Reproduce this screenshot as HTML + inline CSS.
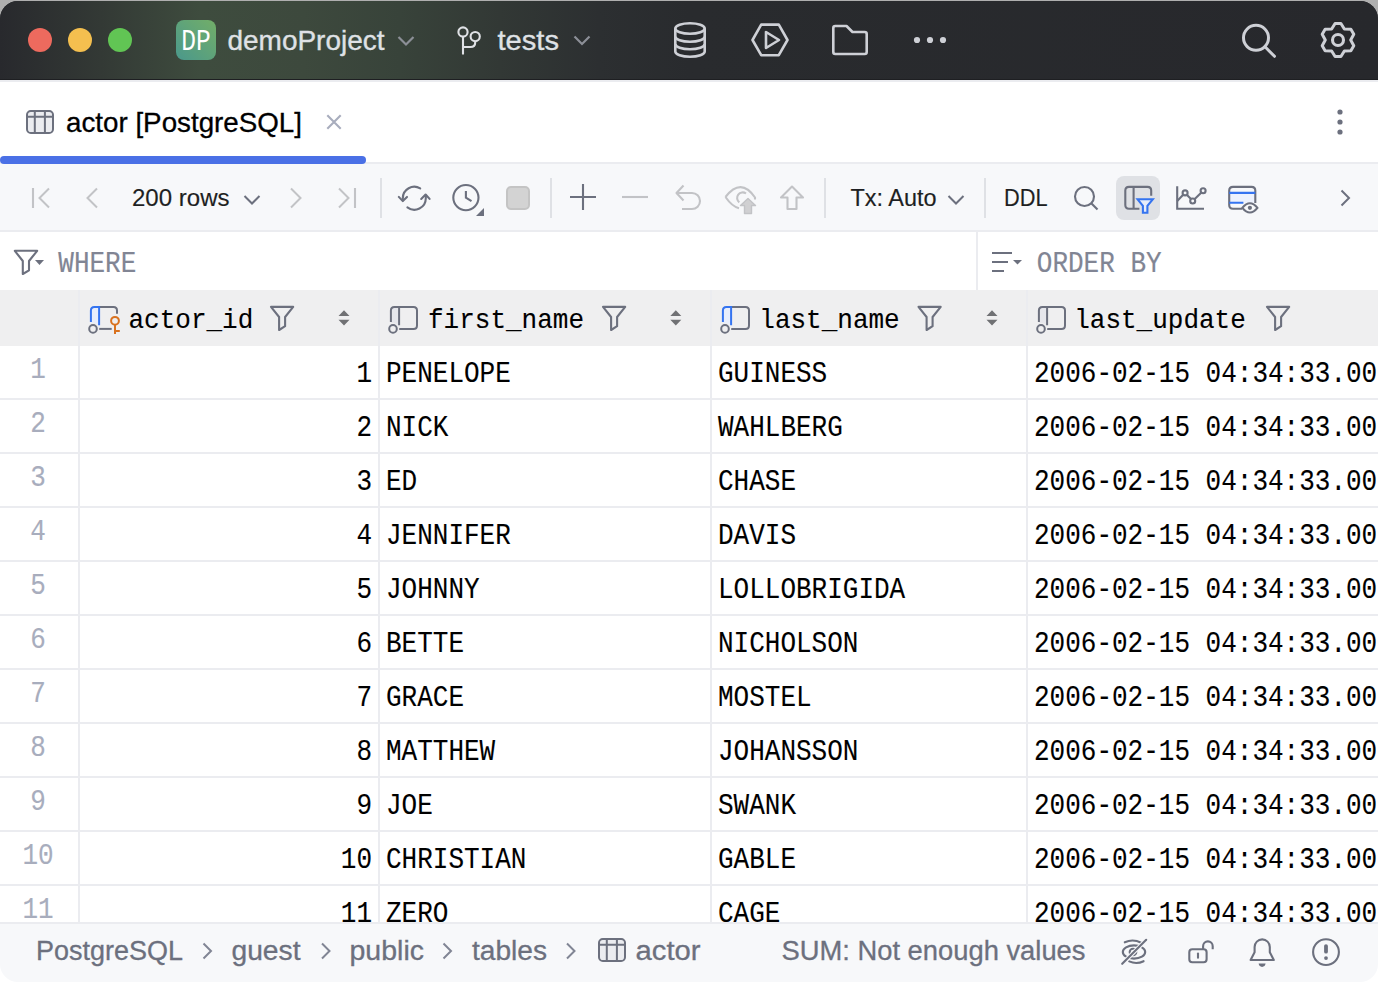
<!DOCTYPE html>
<html><head><meta charset="utf-8"><title>actor [PostgreSQL]</title>
<style>html,body{margin:0;padding:0;width:1378px;height:982px;overflow:hidden;background:#fff;} svg{display:block;} text{white-space:pre;}</style>
</head><body>
<svg width="1378" height="982" viewBox="0 0 1378 982"><defs><linearGradient id="tg" gradientUnits="userSpaceOnUse" x1="0" y1="0" x2="1378" y2="0"><stop offset="0" stop-color="#28292D"/><stop offset="0.073" stop-color="#333935"/><stop offset="0.145" stop-color="#3E4C3E"/><stop offset="0.22" stop-color="#3D493D"/><stop offset="0.29" stop-color="#38433A"/><stop offset="0.363" stop-color="#323835"/><stop offset="0.435" stop-color="#2C2F31"/><stop offset="0.5" stop-color="#292B2E"/><stop offset="1" stop-color="#27282C"/></linearGradient><linearGradient id="dp" x1="0" y1="1" x2="1" y2="0"><stop offset="0" stop-color="#4A988C"/><stop offset="1" stop-color="#72AE68"/></linearGradient></defs>
<rect x="0" y="0" width="1378" height="982" fill="#FFFFFF"/>
<rect x="0" y="0" width="1378" height="40" fill="#AFAFAF"/>
<clipPath id="win"><rect x="0" y="1" width="1378" height="981" rx="18" ry="18"/></clipPath>
<g clip-path="url(#win)">
<rect x="0" y="0" width="1378" height="80" fill="#27282C"/>
<rect x="0" y="0" width="1378" height="80" fill="url(#tg)"/>
<rect x="0" y="79" width="1378" height="1" fill="#1E1F22"/>
<rect x="0" y="80" width="1378" height="84" fill="#FFFFFF"/>
<rect x="0" y="80" width="1378" height="2" fill="#EBECF0"/>
<rect x="0" y="162" width="1378" height="2" fill="#EBECF0"/>
<rect x="0" y="164" width="1378" height="68" fill="#F7F8FA"/>
<rect x="0" y="230" width="1378" height="2" fill="#EBECF0"/>
<rect x="0" y="232" width="1378" height="58" fill="#FFFFFF"/>
<rect x="976" y="232" width="2" height="58" fill="#EBECF0"/>
<rect x="0" y="290" width="1378" height="56" fill="#EFEFF0"/>
<rect x="0" y="346" width="1378" height="576" fill="#FFFFFF"/>
<rect x="0" y="398" width="1378" height="2" fill="#EBECF0"/>
<rect x="0" y="452" width="1378" height="2" fill="#EBECF0"/>
<rect x="0" y="506" width="1378" height="2" fill="#EBECF0"/>
<rect x="0" y="560" width="1378" height="2" fill="#EBECF0"/>
<rect x="0" y="614" width="1378" height="2" fill="#EBECF0"/>
<rect x="0" y="668" width="1378" height="2" fill="#EBECF0"/>
<rect x="0" y="722" width="1378" height="2" fill="#EBECF0"/>
<rect x="0" y="776" width="1378" height="2" fill="#EBECF0"/>
<rect x="0" y="830" width="1378" height="2" fill="#EBECF0"/>
<rect x="0" y="884" width="1378" height="2" fill="#EBECF0"/>
<rect x="78" y="290" width="2" height="632" fill="#EBECF0"/>
<rect x="378" y="290" width="2" height="632" fill="#EBECF0"/>
<rect x="710" y="290" width="2" height="632" fill="#EBECF0"/>
<rect x="1026" y="290" width="2" height="632" fill="#EBECF0"/>
<rect x="0" y="922" width="1378" height="60" fill="#F7F8FA"/>
<rect x="0" y="922" width="1378" height="2" fill="#EBECF0"/>
</g>
<circle cx="40" cy="40" r="12" fill="#ED6A5E"/>
<circle cx="80" cy="40" r="12" fill="#F4BF4F"/>
<circle cx="120" cy="40" r="12" fill="#61C554"/>
<rect x="176" y="20" width="40" height="40" rx="8" fill="url(#dp)"/>
<text x="196" y="50" font-family='"Liberation Mono", monospace' font-size="28.8" fill="#FFFFFF" stroke="#FFFFFF" stroke-width="0" text-anchor="middle" font-weight="normal" textLength="29.5" lengthAdjust="spacingAndGlyphs" >DP</text>
<text x="227.5" y="50" font-family='"Liberation Sans", sans-serif' font-size="27.6" fill="#DFE1E5" stroke="#DFE1E5" stroke-width="0.35" text-anchor="start" font-weight="normal" textLength="157" lengthAdjust="spacingAndGlyphs" >demoProject</text>
<path d="M398.5 37 L406 44.5 L413.5 37" fill="none" stroke="#8C8F97" stroke-width="2.2"/>
<g fill="none" stroke="#DFE1E5" stroke-width="2.1"><circle cx="463" cy="32" r="4.6"/><circle cx="475.2" cy="36.6" r="4.6"/><path d="M463 36.6 V54.5"/><path d="M475.2 41.2 V42.5 Q475.2 47 470.5 47 H463"/></g>
<text x="497.5" y="50" font-family='"Liberation Sans", sans-serif' font-size="28" fill="#DFE1E5" stroke="#DFE1E5" stroke-width="0.35" text-anchor="start" font-weight="normal" textLength="61.5" lengthAdjust="spacingAndGlyphs" >tests</text>
<path d="M574.5 36.5 L582 44 L589.5 36.5" fill="none" stroke="#8C8F97" stroke-width="2.2"/>
<g fill="none" stroke="#CED0D6" stroke-width="2.6"><ellipse cx="690" cy="28.5" rx="14.7" ry="5.3"/><path d="M675.3 28.5 V51.5 A14.7 5.3 0 0 0 704.7 51.5 V28.5"/><path d="M675.3 36.5 A14.7 5.3 0 0 0 704.7 36.5"/><path d="M675.3 44 A14.7 5.3 0 0 0 704.7 44"/></g>
<g fill="none" stroke="#CED0D6" stroke-width="2.6" stroke-linejoin="round"><path d="M752.5 40 L761.2 24.6 H778.8 L787.5 40 L778.8 55.2 H761.2 Z"/><path d="M766 32 V48 L779 40 Z"/></g>
<path d="M833.3 28 Q833.3 26 835.3 26 H846.5 L852.5 32 H864.7 Q866.7 32 866.7 34 V52 Q866.7 54 864.7 54 H835.3 Q833.3 54 833.3 52 Z" fill="none" stroke="#CED0D6" stroke-width="2.6" stroke-linejoin="round"/>
<circle cx="917" cy="40" r="3.1" fill="#CED0D6"/>
<circle cx="930" cy="40" r="3.1" fill="#CED0D6"/>
<circle cx="943" cy="40" r="3.1" fill="#CED0D6"/>
<g fill="none" stroke="#CED0D6" stroke-width="3"><circle cx="1256" cy="37.8" r="12.5"/><path d="M1265 46.8 L1274.5 56.3" stroke-linecap="round"/></g>
<path d="M1331.65 29.00 L1335.08 23.46 L1340.92 23.46 L1344.35 29.00 L1350.87 29.20 L1353.79 34.25 L1350.70 40.00 L1353.79 45.75 L1350.87 50.80 L1344.35 51.00 L1340.92 56.54 L1335.08 56.54 L1331.65 51.00 L1325.13 50.80 L1322.21 45.75 L1325.30 40.00 L1322.21 34.25 L1325.13 29.20 Z" fill="none" stroke="#CED0D6" stroke-width="3" stroke-linejoin="round"/>
<circle cx="1338" cy="40" r="5.5" fill="none" stroke="#CED0D6" stroke-width="3.1"/>
<g stroke="#6C707E" stroke-width="2" fill="none"><rect x="27" y="111" width="26" height="22" rx="3.8" fill="#EBECF0"/><path d="M27 116.8 H53 M34.8 111 V133 M44.9 111 V133"/></g>
<text x="66" y="132.2" font-family='"Liberation Sans", sans-serif' font-size="27.6" fill="#000000" stroke="#000000" stroke-width="0.3" text-anchor="start" font-weight="normal" textLength="236" lengthAdjust="spacingAndGlyphs" >actor [PostgreSQL]</text>
<path d="M327.3 115.3 L340.7 128.7 M340.7 115.3 L327.3 128.7" stroke="#A8ADBD" stroke-width="2.1"/>
<rect x="0" y="156" width="366" height="8" rx="4" fill="#4A70E6"/>
<circle cx="1340" cy="112" r="2.6" fill="#6C707E"/>
<circle cx="1340" cy="122" r="2.6" fill="#6C707E"/>
<circle cx="1340" cy="132" r="2.6" fill="#6C707E"/>
<path d="M33 188 V208" stroke="#C2C3C6" stroke-width="2.1"/>
<path d="M49 188.5 L39.5 198 L49 207.5" fill="none" stroke="#C2C3C6" stroke-width="2.0"/>
<path d="M97 188.5 L87.5 198 L97 207.5" fill="none" stroke="#C2C3C6" stroke-width="2.0"/>
<text x="132" y="206.2" font-family='"Liberation Sans", sans-serif' font-size="23.2" fill="#1E1F22" stroke="#1E1F22" stroke-width="0.15" text-anchor="start" font-weight="normal" textLength="97.5" lengthAdjust="spacingAndGlyphs" >200 rows</text>
<path d="M244.5 196 L252 203.5 L259.5 196" fill="none" stroke="#6C707E" stroke-width="2.0"/>
<path d="M291 188.5 L300.5 198 L291 207.5" fill="none" stroke="#C2C3C6" stroke-width="2.0"/>
<path d="M339 188.5 L348.5 198 L339 207.5" fill="none" stroke="#C2C3C6" stroke-width="2.0"/>
<path d="M355 188 V208" stroke="#C2C3C6" stroke-width="2.1"/>
<rect x="380" y="178" width="2" height="40" fill="#DFE1E5"/>
<rect x="550" y="178" width="2" height="40" fill="#DFE1E5"/>
<rect x="824" y="178" width="2" height="40" fill="#DFE1E5"/>
<rect x="984" y="178" width="2" height="40" fill="#DFE1E5"/>
<g fill="none" stroke="#6C707E" stroke-width="2.1" stroke-linecap="round" stroke-linejoin="round"><path d="M420.2 188.4 A11.5 11.5 0 0 0 402.8 198.2 V200.5"/><path d="M407.4 207.4 A11.5 11.5 0 0 0 425.8 198.2 V195.5"/><path d="M398.8 196.9 L402.8 201.1 L407 196.9"/><path d="M421.2 198.9 L425.6 194.5 L429.6 198.9"/></g>
<g fill="none" stroke="#6C707E" stroke-width="2.1"><circle cx="465.9" cy="197.6" r="12.6"/><path d="M465.9 191 V197.6 L471.5 201.2"/></g>
<path d="M484 208 V216 H476 Z" fill="#6C707E"/>
<rect x="507" y="187" width="22" height="22" rx="4" fill="#D3D3D3" stroke="#C4C4C4" stroke-width="2"/>
<path d="M570 197 H596 M583 184 V210" stroke="#6C707E" stroke-width="2.1"/>
<path d="M622 197 H648" stroke="#C2C3C6" stroke-width="2.1"/>
<g fill="none" stroke="#C2C3C6" stroke-width="2.1" stroke-linejoin="round"><path d="M683.5 185.5 L676.5 193 L683.5 200.5"/><path d="M676.5 193 H692 A8 8 0 0 1 692 209 H682"/></g>
<g fill="none" stroke="#C2C3C6" stroke-width="2.1"><path d="M725.5 197 Q741 177 755 197.5 V199.5"/><path d="M725.5 197 Q732 206.5 739 208.2"/><path d="M746 193.5 A5.3 5.3 0 1 0 739.3 202.3"/></g>
<path d="M748 198.5 L755.5 205.5 H751.5 V213.5 H744.5 V205.5 H740.5 Z" fill="#D0D0D2" stroke="#C2C3C6" stroke-width="1.4" stroke-linejoin="round"/>
<path d="M792 186.5 L803 197.5 H796.5 V209 H787.5 V197.5 H781 Z" fill="none" stroke="#C2C3C6" stroke-width="2.1" stroke-linejoin="round"/>
<text x="850.5" y="206.2" font-family='"Liberation Sans", sans-serif' font-size="23.2" fill="#1E1F22" stroke="#1E1F22" stroke-width="0.15" text-anchor="start" font-weight="normal" textLength="86" lengthAdjust="spacingAndGlyphs" >Tx: Auto</text>
<path d="M948.5 196 L956 203.5 L963.5 196" fill="none" stroke="#6C707E" stroke-width="2.0"/>
<text x="1004" y="206.2" font-family='"Liberation Sans", sans-serif' font-size="23.2" fill="#1E1F22" stroke="#1E1F22" stroke-width="0.15" text-anchor="start" font-weight="normal" textLength="43.5" lengthAdjust="spacingAndGlyphs" >DDL</text>
<g fill="none" stroke="#6C707E" stroke-width="2.1"><circle cx="1084.5" cy="196.5" r="9.5"/><path d="M1091.5 203.5 L1097.5 209.5"/></g>
<rect x="1116" y="176" width="44" height="44" rx="8" fill="#DFE1E5"/>
<g fill="none" stroke="#6C707E" stroke-width="2.1"><path d="M1139.4 208.7 H1129 Q1125.3 208.7 1125.3 205 V190.6 Q1125.3 186.9 1129 186.9 H1147.5 Q1151.2 186.9 1151.2 190.6 V195.8"/><path d="M1133.6 186.9 V208.7"/></g>
<path d="M1137.6 199.3 H1152.8 L1147.4 205.8 V212.8 H1142.9 V205.8 Z" fill="#E6ECFA" stroke="#3574F0" stroke-width="2.1" stroke-linejoin="miter"/>
<g fill="none" stroke="#6C707E" stroke-width="2.1"><path d="M1177.2 186.3 V208.7 H1204"/><path d="M1177.2 201 L1183.4 194.6"/><path d="M1186.8 194.8 L1191 199.1"/><path d="M1194.5 199.2 L1201.4 192.4"/><circle cx="1185.1" cy="192.9" r="2.5"/><circle cx="1192.7" cy="201" r="2.5"/><circle cx="1203.1" cy="190.7" r="2.5"/></g>
<rect x="1229.2" y="192.9" width="26" height="9.8" fill="#EDF2FE"/>
<path d="M1242 208.7 H1233 Q1229.2 208.7 1229.2 205 V190.6 Q1229.2 186.9 1233 186.9 H1251.5 Q1255.3 186.9 1255.3 190.6 V203" fill="none" stroke="#6C707E" stroke-width="2.1"/>
<path d="M1229.2 192.9 H1255.3 M1229.2 202.7 H1243.4" stroke="#3574F0" stroke-width="2.1"/>
<path d="M1242.3 207.9 Q1249.9 198.6 1257.5 207.9 Q1249.9 217.2 1242.3 207.9 Z" fill="#F7F8FA" stroke="#6C707E" stroke-width="2.1" stroke-linejoin="round"/><circle cx="1249.9" cy="207.8" r="2.1" fill="#6C707E"/>
<path d="M1341.5 190.5 L1349 198 L1341.5 205.5" fill="none" stroke="#6C707E" stroke-width="2.0"/>
<path d="M14.8 250.8 H37.2 L29 261 V270.3 L22.8 274 V261 Z" fill="none" stroke="#6C707E" stroke-width="2.1" stroke-linejoin="round"/>
<path d="M35 260 H44 L39.5 265 Z" fill="#6C707E"/>
<text x="58.30" y="272" font-family='"Liberation Mono", monospace' font-size="30" fill="#818594" stroke="#818594" stroke-width="0.2" textLength="78.00" lengthAdjust="spacingAndGlyphs">WHERE</text>
<path d="M992 253 H1012 M992 262 H1008 M992 271 H1004" stroke="#6C707E" stroke-width="2.1"/>
<path d="M1013 260 H1022 L1017.5 264.5 Z" fill="#6C707E"/>
<text x="1036.80" y="272" font-family='"Liberation Mono", monospace' font-size="30" fill="#818594" stroke="#818594" stroke-width="0.2" textLength="124.80" lengthAdjust="spacingAndGlyphs">ORDER BY</text>
<rect x="90.9" y="306.9" width="8.199999999999989" height="22.0" fill="#E8EEFC"/>
<path d="M99.1 306.9 H113.5 Q117 306.9 117 310.4 V313.8" fill="none" stroke="#6C707E" stroke-width="2"/>
<path d="M99.1 328.9 H111.7" fill="none" stroke="#6C707E" stroke-width="2"/>
<g fill="none" stroke="#D9721F" stroke-width="2"><circle cx="115" cy="320.8" r="3.9"/><path d="M115 324.7 V334 M115 331 H119.8"/></g>
<path d="M90.9 322 V310.4 Q90.9 306.9 94.4 306.9 H99.1 V325.3" fill="none" stroke="#3574F0" stroke-width="2"/>
<circle cx="93" cy="328.9" r="6.2" fill="#EFEFF0"/>
<circle cx="93" cy="328.9" r="3.8" fill="none" stroke="#6C707E" stroke-width="2"/>
<text x="128.50" y="328" font-family='"Liberation Mono", monospace' font-size="28.5" fill="#000000" stroke="#000000" stroke-width="0.12" textLength="124.80" lengthAdjust="spacingAndGlyphs">actor_id</text>
<path d="M271 306.9 H293.2 L285.1 317 V326.2 L279.1 330 V317 Z" fill="none" stroke="#6C707E" stroke-width="2.1" stroke-linejoin="round"/>
<path d="M338.5 316 L344.0 310.3 L349.5 316 Z M338.5 319.8 L344.0 325.6 L349.5 319.8 Z" fill="#707174"/>
<rect x="390.9" y="306.9" width="8.200000000000045" height="22.0" fill="#E6E7EC"/>
<path d="M399.1 306.9 H413.5 Q417 306.9 417 310.4 V325.4 Q417 328.9 413.5 328.9 H399.1" fill="none" stroke="#6C707E" stroke-width="2"/>
<path d="M390.9 322 V310.4 Q390.9 306.9 394.4 306.9 H399.1 V325.3" fill="none" stroke="#6C707E" stroke-width="2"/>
<circle cx="393" cy="328.9" r="6.2" fill="#EFEFF0"/>
<circle cx="393" cy="328.9" r="3.8" fill="none" stroke="#6C707E" stroke-width="2"/>
<text x="428.00" y="328" font-family='"Liberation Mono", monospace' font-size="28.5" fill="#000000" stroke="#000000" stroke-width="0.12" textLength="156.00" lengthAdjust="spacingAndGlyphs">first_name</text>
<path d="M603 306.9 H625.2 L617.1 317 V326.2 L611.1 330 V317 Z" fill="none" stroke="#6C707E" stroke-width="2.1" stroke-linejoin="round"/>
<path d="M670.3 316 L675.8 310.3 L681.3 316 Z M670.3 319.8 L675.8 325.6 L681.3 319.8 Z" fill="#707174"/>
<rect x="722.9" y="306.9" width="8.200000000000045" height="22.0" fill="#E8EEFC"/>
<path d="M731.1 306.9 H745.5 Q749 306.9 749 310.4 V325.4 Q749 328.9 745.5 328.9 H731.1" fill="none" stroke="#6C707E" stroke-width="2"/>
<path d="M722.9 322 V310.4 Q722.9 306.9 726.4 306.9 H731.1 V325.3" fill="none" stroke="#3574F0" stroke-width="2"/>
<circle cx="725" cy="328.9" r="6.2" fill="#EFEFF0"/>
<circle cx="725" cy="328.9" r="3.8" fill="none" stroke="#6C707E" stroke-width="2"/>
<text x="759.30" y="328" font-family='"Liberation Mono", monospace' font-size="28.5" fill="#000000" stroke="#000000" stroke-width="0.12" textLength="140.40" lengthAdjust="spacingAndGlyphs">last_name</text>
<path d="M918.5 306.9 H940.7 L932.6 317 V326.2 L926.6 330 V317 Z" fill="none" stroke="#6C707E" stroke-width="2.1" stroke-linejoin="round"/>
<path d="M986.5 316 L992.0 310.3 L997.5 316 Z M986.5 319.8 L992.0 325.6 L997.5 319.8 Z" fill="#707174"/>
<rect x="1038.9" y="306.9" width="8.199999999999818" height="22.0" fill="#E6E7EC"/>
<path d="M1047.1 306.9 H1061.5 Q1065 306.9 1065 310.4 V325.4 Q1065 328.9 1061.5 328.9 H1047.1" fill="none" stroke="#6C707E" stroke-width="2"/>
<path d="M1038.9 322 V310.4 Q1038.9 306.9 1042.4 306.9 H1047.1 V325.3" fill="none" stroke="#6C707E" stroke-width="2"/>
<circle cx="1041" cy="328.9" r="6.2" fill="#EFEFF0"/>
<circle cx="1041" cy="328.9" r="3.8" fill="none" stroke="#6C707E" stroke-width="2"/>
<text x="1074.20" y="328" font-family='"Liberation Mono", monospace' font-size="28.5" fill="#000000" stroke="#000000" stroke-width="0.12" textLength="171.60" lengthAdjust="spacingAndGlyphs">last_update</text>
<path d="M1267 306.9 H1289.2 L1281.1 317 V326.2 L1275.1 330 V317 Z" fill="none" stroke="#6C707E" stroke-width="2.1" stroke-linejoin="round"/>
<clipPath id="body"><rect x="0" y="346" width="1378" height="576"/></clipPath><g clip-path="url(#body)">
<text x="30.20" y="378.3" font-family='"Liberation Mono", monospace' font-size="30" fill="#A8ADBD" stroke="#A8ADBD" stroke-width="0.12" textLength="15.60" lengthAdjust="spacingAndGlyphs">1</text>
<text x="356.40" y="382" font-family='"Liberation Mono", monospace' font-size="30" fill="#000000" stroke="#000000" stroke-width="0.12" textLength="15.60" lengthAdjust="spacingAndGlyphs">1</text>
<text x="386.00" y="382" font-family='"Liberation Mono", monospace' font-size="30" fill="#000000" stroke="#000000" stroke-width="0.12" textLength="124.80" lengthAdjust="spacingAndGlyphs">PENELOPE</text>
<text x="718.00" y="382" font-family='"Liberation Mono", monospace' font-size="30" fill="#000000" stroke="#000000" stroke-width="0.12" textLength="109.20" lengthAdjust="spacingAndGlyphs">GUINESS</text>
<text x="1034.00" y="382" font-family='"Liberation Mono", monospace' font-size="30" fill="#000000" stroke="#000000" stroke-width="0.12" textLength="405.60" lengthAdjust="spacingAndGlyphs">2006-02-15 04:34:33.000000</text>
<text x="30.20" y="432.3" font-family='"Liberation Mono", monospace' font-size="30" fill="#A8ADBD" stroke="#A8ADBD" stroke-width="0.12" textLength="15.60" lengthAdjust="spacingAndGlyphs">2</text>
<text x="356.40" y="436" font-family='"Liberation Mono", monospace' font-size="30" fill="#000000" stroke="#000000" stroke-width="0.12" textLength="15.60" lengthAdjust="spacingAndGlyphs">2</text>
<text x="386.00" y="436" font-family='"Liberation Mono", monospace' font-size="30" fill="#000000" stroke="#000000" stroke-width="0.12" textLength="62.40" lengthAdjust="spacingAndGlyphs">NICK</text>
<text x="718.00" y="436" font-family='"Liberation Mono", monospace' font-size="30" fill="#000000" stroke="#000000" stroke-width="0.12" textLength="124.80" lengthAdjust="spacingAndGlyphs">WAHLBERG</text>
<text x="1034.00" y="436" font-family='"Liberation Mono", monospace' font-size="30" fill="#000000" stroke="#000000" stroke-width="0.12" textLength="405.60" lengthAdjust="spacingAndGlyphs">2006-02-15 04:34:33.000000</text>
<text x="30.20" y="486.3" font-family='"Liberation Mono", monospace' font-size="30" fill="#A8ADBD" stroke="#A8ADBD" stroke-width="0.12" textLength="15.60" lengthAdjust="spacingAndGlyphs">3</text>
<text x="356.40" y="490" font-family='"Liberation Mono", monospace' font-size="30" fill="#000000" stroke="#000000" stroke-width="0.12" textLength="15.60" lengthAdjust="spacingAndGlyphs">3</text>
<text x="386.00" y="490" font-family='"Liberation Mono", monospace' font-size="30" fill="#000000" stroke="#000000" stroke-width="0.12" textLength="31.20" lengthAdjust="spacingAndGlyphs">ED</text>
<text x="718.00" y="490" font-family='"Liberation Mono", monospace' font-size="30" fill="#000000" stroke="#000000" stroke-width="0.12" textLength="78.00" lengthAdjust="spacingAndGlyphs">CHASE</text>
<text x="1034.00" y="490" font-family='"Liberation Mono", monospace' font-size="30" fill="#000000" stroke="#000000" stroke-width="0.12" textLength="405.60" lengthAdjust="spacingAndGlyphs">2006-02-15 04:34:33.000000</text>
<text x="30.20" y="540.3" font-family='"Liberation Mono", monospace' font-size="30" fill="#A8ADBD" stroke="#A8ADBD" stroke-width="0.12" textLength="15.60" lengthAdjust="spacingAndGlyphs">4</text>
<text x="356.40" y="544" font-family='"Liberation Mono", monospace' font-size="30" fill="#000000" stroke="#000000" stroke-width="0.12" textLength="15.60" lengthAdjust="spacingAndGlyphs">4</text>
<text x="386.00" y="544" font-family='"Liberation Mono", monospace' font-size="30" fill="#000000" stroke="#000000" stroke-width="0.12" textLength="124.80" lengthAdjust="spacingAndGlyphs">JENNIFER</text>
<text x="718.00" y="544" font-family='"Liberation Mono", monospace' font-size="30" fill="#000000" stroke="#000000" stroke-width="0.12" textLength="78.00" lengthAdjust="spacingAndGlyphs">DAVIS</text>
<text x="1034.00" y="544" font-family='"Liberation Mono", monospace' font-size="30" fill="#000000" stroke="#000000" stroke-width="0.12" textLength="405.60" lengthAdjust="spacingAndGlyphs">2006-02-15 04:34:33.000000</text>
<text x="30.20" y="594.3" font-family='"Liberation Mono", monospace' font-size="30" fill="#A8ADBD" stroke="#A8ADBD" stroke-width="0.12" textLength="15.60" lengthAdjust="spacingAndGlyphs">5</text>
<text x="356.40" y="598" font-family='"Liberation Mono", monospace' font-size="30" fill="#000000" stroke="#000000" stroke-width="0.12" textLength="15.60" lengthAdjust="spacingAndGlyphs">5</text>
<text x="386.00" y="598" font-family='"Liberation Mono", monospace' font-size="30" fill="#000000" stroke="#000000" stroke-width="0.12" textLength="93.60" lengthAdjust="spacingAndGlyphs">JOHNNY</text>
<text x="718.00" y="598" font-family='"Liberation Mono", monospace' font-size="30" fill="#000000" stroke="#000000" stroke-width="0.12" textLength="187.20" lengthAdjust="spacingAndGlyphs">LOLLOBRIGIDA</text>
<text x="1034.00" y="598" font-family='"Liberation Mono", monospace' font-size="30" fill="#000000" stroke="#000000" stroke-width="0.12" textLength="405.60" lengthAdjust="spacingAndGlyphs">2006-02-15 04:34:33.000000</text>
<text x="30.20" y="648.3" font-family='"Liberation Mono", monospace' font-size="30" fill="#A8ADBD" stroke="#A8ADBD" stroke-width="0.12" textLength="15.60" lengthAdjust="spacingAndGlyphs">6</text>
<text x="356.40" y="652" font-family='"Liberation Mono", monospace' font-size="30" fill="#000000" stroke="#000000" stroke-width="0.12" textLength="15.60" lengthAdjust="spacingAndGlyphs">6</text>
<text x="386.00" y="652" font-family='"Liberation Mono", monospace' font-size="30" fill="#000000" stroke="#000000" stroke-width="0.12" textLength="78.00" lengthAdjust="spacingAndGlyphs">BETTE</text>
<text x="718.00" y="652" font-family='"Liberation Mono", monospace' font-size="30" fill="#000000" stroke="#000000" stroke-width="0.12" textLength="140.40" lengthAdjust="spacingAndGlyphs">NICHOLSON</text>
<text x="1034.00" y="652" font-family='"Liberation Mono", monospace' font-size="30" fill="#000000" stroke="#000000" stroke-width="0.12" textLength="405.60" lengthAdjust="spacingAndGlyphs">2006-02-15 04:34:33.000000</text>
<text x="30.20" y="702.3" font-family='"Liberation Mono", monospace' font-size="30" fill="#A8ADBD" stroke="#A8ADBD" stroke-width="0.12" textLength="15.60" lengthAdjust="spacingAndGlyphs">7</text>
<text x="356.40" y="706" font-family='"Liberation Mono", monospace' font-size="30" fill="#000000" stroke="#000000" stroke-width="0.12" textLength="15.60" lengthAdjust="spacingAndGlyphs">7</text>
<text x="386.00" y="706" font-family='"Liberation Mono", monospace' font-size="30" fill="#000000" stroke="#000000" stroke-width="0.12" textLength="78.00" lengthAdjust="spacingAndGlyphs">GRACE</text>
<text x="718.00" y="706" font-family='"Liberation Mono", monospace' font-size="30" fill="#000000" stroke="#000000" stroke-width="0.12" textLength="93.60" lengthAdjust="spacingAndGlyphs">MOSTEL</text>
<text x="1034.00" y="706" font-family='"Liberation Mono", monospace' font-size="30" fill="#000000" stroke="#000000" stroke-width="0.12" textLength="405.60" lengthAdjust="spacingAndGlyphs">2006-02-15 04:34:33.000000</text>
<text x="30.20" y="756.3" font-family='"Liberation Mono", monospace' font-size="30" fill="#A8ADBD" stroke="#A8ADBD" stroke-width="0.12" textLength="15.60" lengthAdjust="spacingAndGlyphs">8</text>
<text x="356.40" y="760" font-family='"Liberation Mono", monospace' font-size="30" fill="#000000" stroke="#000000" stroke-width="0.12" textLength="15.60" lengthAdjust="spacingAndGlyphs">8</text>
<text x="386.00" y="760" font-family='"Liberation Mono", monospace' font-size="30" fill="#000000" stroke="#000000" stroke-width="0.12" textLength="109.20" lengthAdjust="spacingAndGlyphs">MATTHEW</text>
<text x="718.00" y="760" font-family='"Liberation Mono", monospace' font-size="30" fill="#000000" stroke="#000000" stroke-width="0.12" textLength="140.40" lengthAdjust="spacingAndGlyphs">JOHANSSON</text>
<text x="1034.00" y="760" font-family='"Liberation Mono", monospace' font-size="30" fill="#000000" stroke="#000000" stroke-width="0.12" textLength="405.60" lengthAdjust="spacingAndGlyphs">2006-02-15 04:34:33.000000</text>
<text x="30.20" y="810.3" font-family='"Liberation Mono", monospace' font-size="30" fill="#A8ADBD" stroke="#A8ADBD" stroke-width="0.12" textLength="15.60" lengthAdjust="spacingAndGlyphs">9</text>
<text x="356.40" y="814" font-family='"Liberation Mono", monospace' font-size="30" fill="#000000" stroke="#000000" stroke-width="0.12" textLength="15.60" lengthAdjust="spacingAndGlyphs">9</text>
<text x="386.00" y="814" font-family='"Liberation Mono", monospace' font-size="30" fill="#000000" stroke="#000000" stroke-width="0.12" textLength="46.80" lengthAdjust="spacingAndGlyphs">JOE</text>
<text x="718.00" y="814" font-family='"Liberation Mono", monospace' font-size="30" fill="#000000" stroke="#000000" stroke-width="0.12" textLength="78.00" lengthAdjust="spacingAndGlyphs">SWANK</text>
<text x="1034.00" y="814" font-family='"Liberation Mono", monospace' font-size="30" fill="#000000" stroke="#000000" stroke-width="0.12" textLength="405.60" lengthAdjust="spacingAndGlyphs">2006-02-15 04:34:33.000000</text>
<text x="22.40" y="864.3" font-family='"Liberation Mono", monospace' font-size="30" fill="#A8ADBD" stroke="#A8ADBD" stroke-width="0.12" textLength="31.20" lengthAdjust="spacingAndGlyphs">10</text>
<text x="340.80" y="868" font-family='"Liberation Mono", monospace' font-size="30" fill="#000000" stroke="#000000" stroke-width="0.12" textLength="31.20" lengthAdjust="spacingAndGlyphs">10</text>
<text x="386.00" y="868" font-family='"Liberation Mono", monospace' font-size="30" fill="#000000" stroke="#000000" stroke-width="0.12" textLength="140.40" lengthAdjust="spacingAndGlyphs">CHRISTIAN</text>
<text x="718.00" y="868" font-family='"Liberation Mono", monospace' font-size="30" fill="#000000" stroke="#000000" stroke-width="0.12" textLength="78.00" lengthAdjust="spacingAndGlyphs">GABLE</text>
<text x="1034.00" y="868" font-family='"Liberation Mono", monospace' font-size="30" fill="#000000" stroke="#000000" stroke-width="0.12" textLength="405.60" lengthAdjust="spacingAndGlyphs">2006-02-15 04:34:33.000000</text>
<text x="22.40" y="918.3" font-family='"Liberation Mono", monospace' font-size="30" fill="#A8ADBD" stroke="#A8ADBD" stroke-width="0.12" textLength="31.20" lengthAdjust="spacingAndGlyphs">11</text>
<text x="340.80" y="922" font-family='"Liberation Mono", monospace' font-size="30" fill="#000000" stroke="#000000" stroke-width="0.12" textLength="31.20" lengthAdjust="spacingAndGlyphs">11</text>
<text x="386.00" y="922" font-family='"Liberation Mono", monospace' font-size="30" fill="#000000" stroke="#000000" stroke-width="0.12" textLength="62.40" lengthAdjust="spacingAndGlyphs">ZERO</text>
<text x="718.00" y="922" font-family='"Liberation Mono", monospace' font-size="30" fill="#000000" stroke="#000000" stroke-width="0.12" textLength="62.40" lengthAdjust="spacingAndGlyphs">CAGE</text>
<text x="1034.00" y="922" font-family='"Liberation Mono", monospace' font-size="30" fill="#000000" stroke="#000000" stroke-width="0.12" textLength="405.60" lengthAdjust="spacingAndGlyphs">2006-02-15 04:34:33.000000</text>
</g>
<text x="36" y="960.2" font-family='"Liberation Sans", sans-serif' font-size="27" fill="#6C707E" stroke="#6C707E" stroke-width="0.3" text-anchor="start" font-weight="normal" textLength="147" lengthAdjust="spacingAndGlyphs" >PostgreSQL</text>
<path d="M203.5 943.5 L211 951 L203.5 958.5" fill="none" stroke="#818594" stroke-width="2.0"/>
<text x="231.5" y="960.2" font-family='"Liberation Sans", sans-serif' font-size="27" fill="#6C707E" stroke="#6C707E" stroke-width="0.3" text-anchor="start" font-weight="normal" textLength="69" lengthAdjust="spacingAndGlyphs" >guest</text>
<path d="M322 943.5 L329.5 951 L322 958.5" fill="none" stroke="#818594" stroke-width="2.0"/>
<text x="349.5" y="960.2" font-family='"Liberation Sans", sans-serif' font-size="27" fill="#6C707E" stroke="#6C707E" stroke-width="0.3" text-anchor="start" font-weight="normal" textLength="74.5" lengthAdjust="spacingAndGlyphs" >public</text>
<path d="M443.5 943.5 L451 951 L443.5 958.5" fill="none" stroke="#818594" stroke-width="2.0"/>
<text x="472" y="960.2" font-family='"Liberation Sans", sans-serif' font-size="27" fill="#6C707E" stroke="#6C707E" stroke-width="0.3" text-anchor="start" font-weight="normal" textLength="75" lengthAdjust="spacingAndGlyphs" >tables</text>
<path d="M567 943.5 L574.5 951 L567 958.5" fill="none" stroke="#818594" stroke-width="2.0"/>
<g stroke="#6C707E" stroke-width="2" fill="none"><rect x="599" y="939" width="26" height="22" rx="3.8" fill="#EBECF0"/><path d="M599 944.8 H625 M606.8 939 V961 M616.9 939 V961"/></g>
<text x="635.5" y="960.2" font-family='"Liberation Sans", sans-serif' font-size="27" fill="#6C707E" stroke="#6C707E" stroke-width="0.3" text-anchor="start" font-weight="normal" textLength="65" lengthAdjust="spacingAndGlyphs" >actor</text>
<text x="781.5" y="960.2" font-family='"Liberation Sans", sans-serif' font-size="27" fill="#6C707E" stroke="#6C707E" stroke-width="0.3" text-anchor="start" font-weight="normal" textLength="304" lengthAdjust="spacingAndGlyphs" >SUM: Not enough values</text>
<g fill="none" stroke="#6C707E" stroke-width="2.1" stroke-linecap="round"><path d="M1124.8 942.3 Q1133 938.6 1141.2 942.8"/><ellipse cx="1134" cy="952" rx="11.2" ry="6.6"/><circle cx="1133" cy="952" r="3.3"/><path d="M1129.2 961.4 Q1136.5 964.6 1143.6 961.2"/></g>
<path d="M1121.5 964.5 L1146.8 939.2" stroke="#F7F8FA" stroke-width="4.2"/>
<path d="M1122.2 963.8 L1146.2 939.8" stroke="#6C707E" stroke-width="2.1" stroke-linecap="round"/>
<g fill="none" stroke="#6C707E" stroke-width="2.1" stroke-linecap="round"><rect x="1189.3" y="949.3" width="17.3" height="12.9" rx="3"/><path d="M1203.1 949.3 V946.2 A4.8 4.8 0 0 1 1212.7 946.2 V949.2" stroke-linecap="butt"/><path d="M1198 953.6 V957.8"/></g>
<g fill="none" stroke="#6C707E" stroke-width="2.1" stroke-linejoin="round"><path d="M1250.6 960 L1254.6 952.3 V947 A7.6 7.6 0 0 1 1269.8 947 V952.3 L1273.8 960 Z"/></g><path d="M1258.6 963.6 H1265.6 Q1265 966.9 1262.1 966.9 Q1259.2 966.9 1258.6 963.6 Z" fill="#6C707E"/>
<circle cx="1326" cy="952.1" r="12.9" fill="none" stroke="#6C707E" stroke-width="2.1"/><path d="M1326 946.1 V951.7" stroke="#6C707E" stroke-width="3.8" stroke-linecap="round"/><circle cx="1326" cy="958.1" r="1.9" fill="#6C707E"/></svg>
</body></html>
